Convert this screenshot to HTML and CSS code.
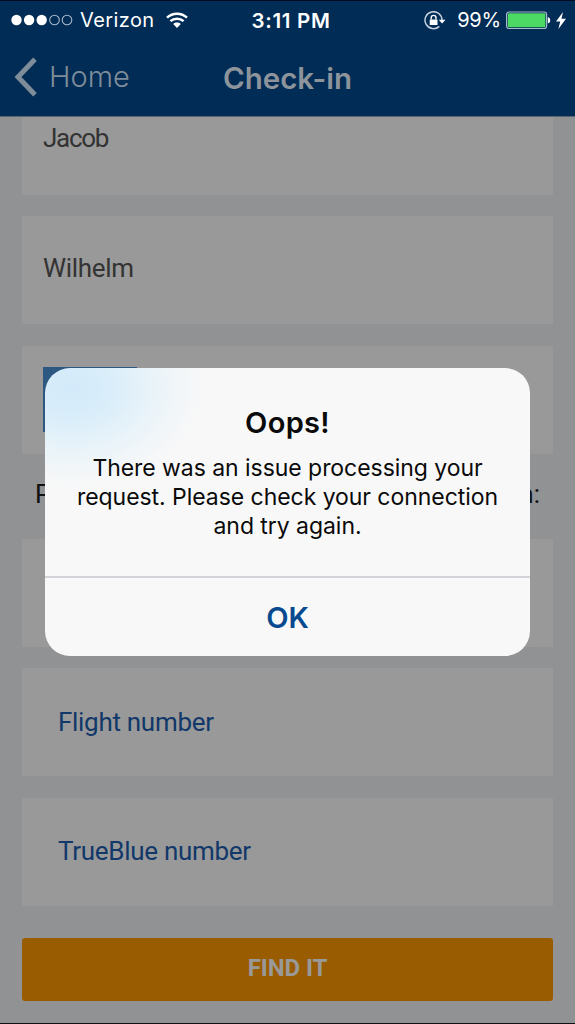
FILE: index.html
```html
<!DOCTYPE html>
<html lang="en">
<head>
    <meta charset="UTF-8">
    <meta name="viewport" content="width=device-width, initial-scale=1.0">
    <title>Check-in</title>
    <link rel="stylesheet" href="styles.css">
</head>
<body>
    <header class="header">
        <div class="status-bar">
            <div class="status-left">
                <svg class="signal" width="62" height="12" viewBox="0 0 62 12">
                    <g fill="#fff">
                        <circle cx="5.5" cy="6" r="5.2"/>
                        <circle cx="18.1" cy="6" r="5.2"/>
                        <circle cx="30.7" cy="6" r="5.2"/>
                    </g>
                    <g fill="none" stroke="#a9b9cc" stroke-width="1.1">
                        <circle cx="43.5" cy="6" r="4.8"/>
                        <circle cx="56" cy="6" r="4.8"/>
                    </g>
                </svg>
                <span class="carrier">Verizon</span>
                <svg class="wifi" width="22" height="17" viewBox="0 0 22 17">
                    <g fill="none" stroke="#fff" stroke-width="2.5">
                        <path d="M1 5.6C6.6.3 15.4.3 21 5.6"/>
                        <path d="M4.4 9.2C8.1 5.8 13.9 5.8 17.6 9.2"/>
                    </g>
                    <path d="M7.2 11.9C9.4 10 12.6 10 14.8 11.9L11 16Z" fill="#fff"/>
                </svg>
            </div>
            <span class="clock">3:11 PM</span>
            <div class="status-right">
                <svg class="lock" width="22" height="19" viewBox="0 0 22 19">
                    <path d="M15.3 15.4A8.5 8.5 0 1 1 18 9.3" fill="none" stroke="#c5d1df" stroke-width="1.5"/>
                    <path d="M14.8 8.7H21.5L18.1 12.4Z" fill="#fff"/>
                    <rect x="5.7" y="8.4" width="7.8" height="5.7" rx=".6" fill="#fff"/>
                    <path d="M7.2 8.6V6.8a2.4 2.4 0 0 1 4.8 0V8.6" fill="none" stroke="#fff" stroke-width="1.4"/>
                </svg>
                <span class="percent">99%</span>
                <svg class="battery" width="46" height="19" viewBox="0 0 46 19">
                    <rect x=".6" y="1" width="40" height="16.5" rx="2.5" fill="none" stroke="#a9b9cc" stroke-width="1.2"/>
                    <rect x="1.8" y="2.2" width="37.6" height="14.1" rx="1.2" fill="#4cd964"/>
                    <path d="M41.8 6.2C45 6.2 45 12.3 41.8 12.3Z" fill="#fff"/>
                </svg>
                <svg class="bolt" width="10" height="17" viewBox="0 0 10 17">
                    <path d="M7 0L0 9.4H4.2L2.4 17L10 6.8H5.5Z" fill="#fff"/>
                </svg>
            </div>
        </div>
        <nav class="nav-bar">
            <a class="back" href="#">
                <svg width="24" height="40" viewBox="0 0 24 40">
                    <path d="M21 2.3L4 20L21 37.7" fill="none" stroke="#7f8d9a" stroke-width="5"/>
                </svg>
                <span>Home</span>
            </a>
            <h1>Check-in</h1>
        </nav>
    </header>

    <main class="content">
        <form class="checkin-form">
            <div class="field first-name">Jacob</div>
            <div class="field">Wilhelm</div>
            <div class="field"><span class="selected"></span></div>
            <p class="hint"><span>P</span><span>n:</span></p>
            <div class="field"></div>
            <div class="field placeholder">Flight number</div>
            <div class="field placeholder">TrueBlue number</div>
            <button type="button" class="submit">FIND IT</button>
        </form>
    </main>

    <div class="alert" role="alertdialog">
        <div class="alert-body">
            <h2>Oops!</h2>
            <p>There was an issue processing your<br>request. Please check your connection<br>and try again.</p>
        </div>
        <button type="button" class="alert-ok">OK</button>
    </div>
</body>
</html>
```
FILE: styles.css
```css
* {
    box-sizing: border-box;
}
body {
    margin: 0;
    height: 1024px;
    overflow: hidden;
    position: relative;
    display: flex;
    flex-direction: column;
    background: #909294;
    font-family: Inter, "Liberation Sans", sans-serif;
}
h1, h2, p {
    margin: 0;
}
button {
    border: none;
    font-family: inherit;
}
svg {
    display: block;
    flex: none;
}

/* header */
.header {
    height: 117px;
    flex: none;
    background: #002c55;
    border-top: 1px solid #000a20;
    border-bottom: 1px solid #5c6670;
    position: relative;
    z-index: 1;
}
.status-bar {
    height: 38px;
    display: grid;
    grid-template-columns: 1fr auto 1fr;
    align-items: center;
    padding: 0 9px 0 11px;
    color: #fff;
    font-size: 20px;
}
.status-left, .status-right {
    display: flex;
    align-items: center;
}
.status-right {
    justify-content: flex-end;
}
.carrier {
    margin: 0 11px 0 7px;
    letter-spacing: 0.4px;
}
.clock {
    font-size: 20.5px;
    font-weight: 600;
    letter-spacing: 0.7px;
    padding-left: 5px;
}
.percent {
    margin: 0 5px 0 11px;
    letter-spacing: -0.2px;
}
.bolt {
    margin-left: 4px;
}
.nav-bar {
    height: 77px;
    display: grid;
    grid-template-columns: 1fr auto 1fr;
    align-items: center;
    padding: 0 14px 2px;
    color: #8d949b;
}
.back {
    display: flex;
    align-items: center;
    gap: 11px;
    color: #7f8d9a;
    font-size: 29px;
    font-weight: 350;
    text-decoration: none;
}
.nav-bar h1 {
    font-size: 29.5px;
    font-weight: 600;
    padding-top: 3px;
}

/* form */
.content {
    padding: 0 22px;
    flex: 1;
    border-bottom: 1px solid #111;
}
.checkin-form {
    display: flex;
    flex-direction: column;
    gap: 21.5px;
    margin-top: -30.5px;
    font-family: Roboto, "Liberation Sans", sans-serif;
}
.field {
    height: 108px;
    flex: none;
    display: flex;
    align-items: center;
    padding: 0 21px 5px;
    background: #999;
    color: #333;
    font-size: 26px;
    font-weight: 400;
    letter-spacing: -0.3px;
}
.first-name {
    letter-spacing: -1.3px;
}
.placeholder {
    padding: 0 36px 1px;
    color: #12386a;
}
.selected {
    width: 94px;
    height: 65px;
    margin-top: 4px;
    background: #2d5881;
}
.hint {
    height: 42px;
    display: flex;
    justify-content: space-between;
    align-items: center;
    padding: 0 13px 4px;
    color: #111;
    font-size: 26px;
    font-weight: 400;
}
.submit {
    height: 63px;
    margin-top: 11px;
    padding: 0 0 3px;
    border-radius: 3px;
    background: #995c00;
    color: #999;
    font-size: 24px;
    font-weight: 700;
    letter-spacing: -0.1px;
}

/* alert */
.alert {
    position: absolute;
    z-index: 2;
    top: 368px;
    left: 45px;
    width: 485px;
    height: 288px;
    border-radius: 25px;
    overflow: hidden;
    display: flex;
    flex-direction: column;
    text-align: center;
    color: #0a0a0a;
    background: radial-gradient(ellipse 135px 100px at 25px 20px, #d3eafa 0%, #d9edfa 30%, #e8f3f9 60%, #f2f6f9 82%, #f8f8f8 100%);
}
.alert-body {
    height: 208px;
    padding-top: 37px;
}
.alert h2 {
    font-size: 29px;
    font-weight: 600;
    line-height: 36px;
    letter-spacing: 0.3px;
}
.alert p {
    margin-top: 13px;
    font-size: 23px;
    line-height: 29px;
    letter-spacing: -0.05px;
}
.alert-ok {
    flex: 1;
    padding: 0;
    background: none;
    border-top: 2px solid #d3d3da;
    color: #074a90;
    font-size: 29px;
    font-weight: 600;
}
```
